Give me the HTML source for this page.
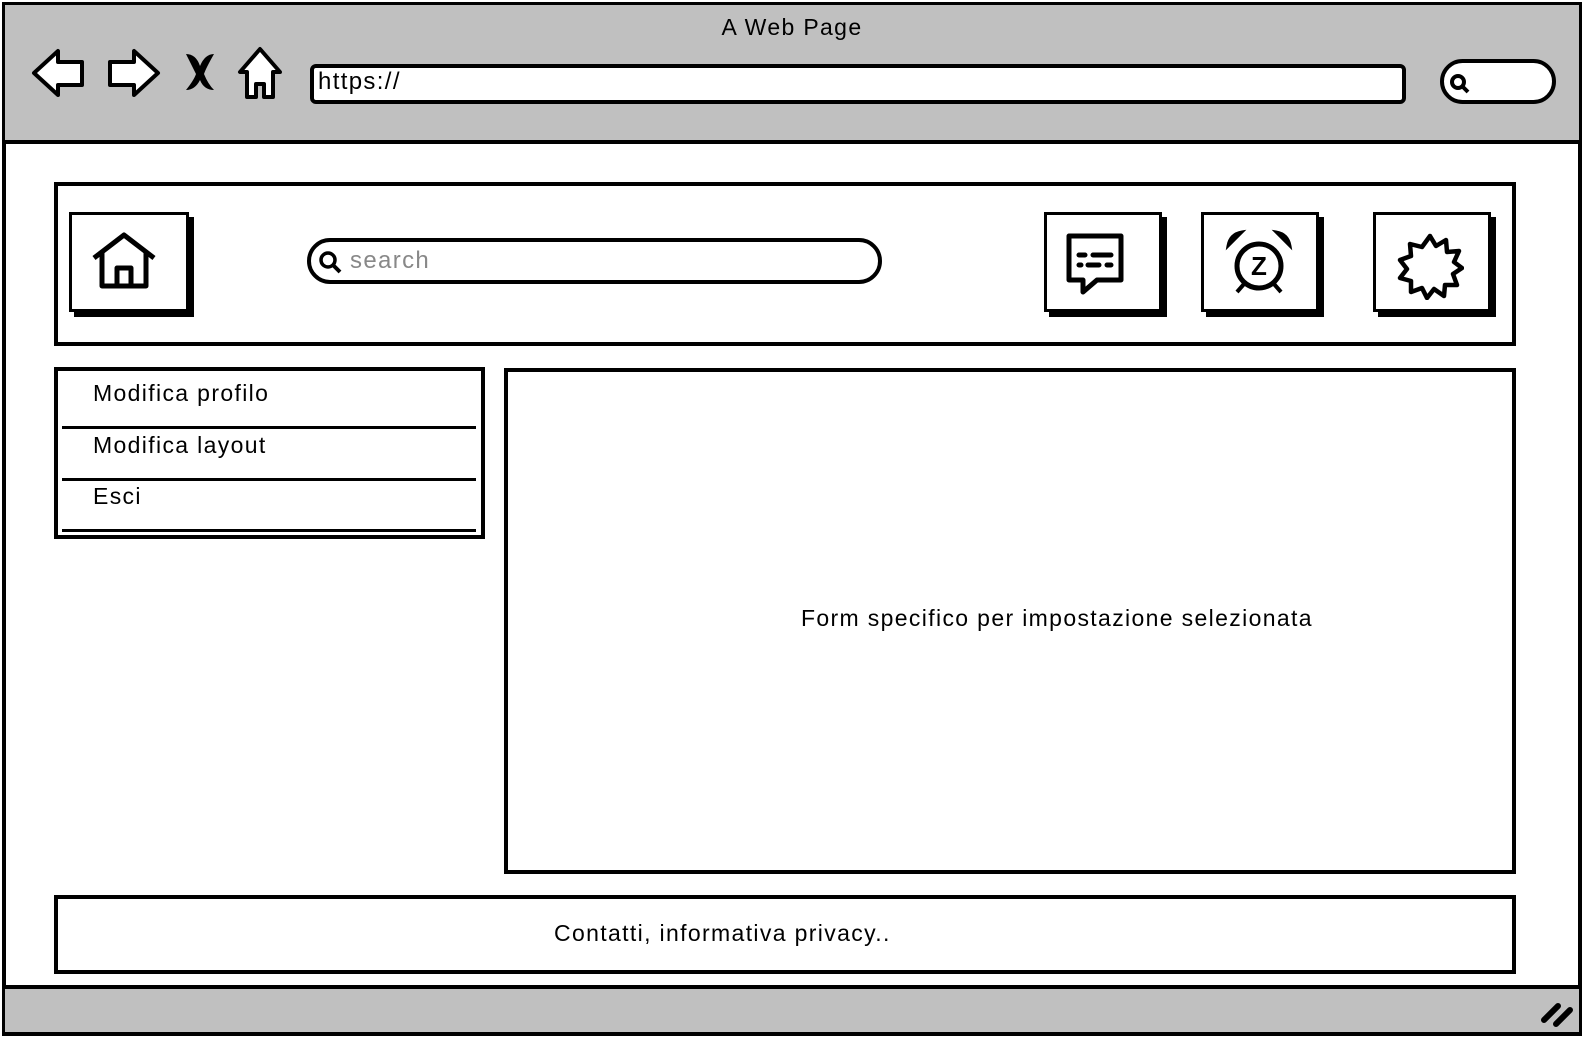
<!DOCTYPE html>
<html><head><meta charset="utf-8"><style>
*{margin:0;padding:0;box-sizing:border-box}
body{width:1584px;height:1040px;background:#fff;position:relative;overflow:hidden;font-family:"Liberation Sans",sans-serif;color:#000}
.a{position:absolute}
.box{position:absolute;border:3px solid #000;background:#fff}
.sh{box-shadow:5px 5px 0 #000}
.t{position:absolute;font-size:23px;white-space:nowrap;letter-spacing:1.35px}
</style></head><body>
<div class="a" style="left:2px;top:2px;width:1580px;height:1034px;border:4px solid #000"></div>
<div class="a" style="left:5px;top:5px;width:1574px;height:139px;background:#c0c0c0;border-bottom:4px solid #000"></div>
<div class="t" style="left:0;width:1584px;text-align:center;top:14px;font-size:23px">A Web Page</div>
<svg class="a" style="left:28px;top:44px" width="260" height="60" viewBox="0 0 260 60">
<g stroke="#000" stroke-width="4" fill="#fff" stroke-linejoin="round">
<path d="M6 29 L30 7 L30 18 L54 18 L54 41 L30 41 L30 51 Z"/>
<path d="M130 29 L106 7 L106 18 L82 18 L82 41 L106 41 L106 51 Z"/>
<path d="M232 5 L212 28 L219 28 L219 53 L228 53 L228 40 L236 40 L236 53 L245 53 L245 28 L252 28 Z"/>
</g>
<path d="M158 10 Q168 10 172 22 Q177 10 186 10 Q178 24 176 30 Q180 40 186 46 Q176 46 172 36 Q167 46 158 46 Q166 36 168 30 Q164 22 158 10Z" fill="#000"/>
</svg>
<div class="box" style="left:310px;top:64px;width:1096px;height:40px;border-radius:6px;border-width:4px"></div>
<div class="t" style="left:318px;top:68px;font-size:24px">https://</div>
<div class="box" style="left:1440px;top:59px;width:116px;height:45px;border-radius:23px;border-width:4px"></div>
<svg class="a" style="left:1448px;top:72px" width="24" height="24"><circle cx="10" cy="10" r="6" stroke="#000" stroke-width="4" fill="none"/><path d="M14 14 L20 20" stroke="#000" stroke-width="4"/></svg>

<div class="box" style="left:54px;top:182px;width:1462px;height:164px;border-width:4px"></div>
<div class="box sh" style="left:69px;top:212px;width:120px;height:100px"></div>
<svg class="a" style="left:90px;top:230px" width="70" height="64" viewBox="0 0 70 64"><g fill="none" stroke="#000" stroke-width="5" stroke-linejoin="round"><path d="M4 28 L34 5 L64 28"/><path d="M12 22 V56 H56 V22"/><path d="M27 56 V38 H41 V56"/></g></svg>
<div class="box" style="left:307px;top:238px;width:575px;height:46px;border-radius:23px;border-width:4px"></div>
<svg class="a" style="left:318px;top:250px" width="26" height="26"><circle cx="10" cy="10" r="7" stroke="#000" stroke-width="3.5" fill="none"/><path d="M15 15 L22 22" stroke="#000" stroke-width="4"/></svg>
<div class="t" style="left:350px;top:247px;color:#888;font-size:24px">search</div>

<div class="box sh" style="left:1044px;top:212px;width:118px;height:100px"></div>
<svg class="a" style="left:1063px;top:230px" width="70" height="70" viewBox="0 0 70 70"><path d="M6 6 H58 V50 H34 L20 62 V50 H6 Z" fill="none" stroke="#000" stroke-width="5" stroke-linejoin="round"/><g stroke="#000" stroke-width="5" stroke-linecap="round"><path d="M16 25 H22 M30 25 H48 M16 35 H18 M25 35 H36 M44 35 H48"/></g></svg>
<div class="box sh" style="left:1201px;top:212px;width:118px;height:100px"></div>
<svg class="a" style="left:1222px;top:228px" width="76" height="72" viewBox="0 0 76 72"><circle cx="37" cy="38" r="22" fill="none" stroke="#000" stroke-width="5"/><path d="M6 18 Q8 6 20 4 Z M68 18 Q66 6 54 4 Z" fill="#000" stroke="#000" stroke-width="3"/><path d="M22 56 L15 64 M52 56 L59 64" stroke="#000" stroke-width="4"/><text x="37" y="47" font-size="26" font-weight="bold" text-anchor="middle" font-family="Liberation Sans">Z</text></svg>
<div class="box sh" style="left:1373px;top:212px;width:118px;height:100px"></div>
<svg class="a" style="left:1396px;top:232px" width="68" height="68" viewBox="0 0 68 68"><path d="M34 4 L40 14 L50 8 L51 20 L63 19 L58 30 L66 36 L57 42 L61 53 L49 53 L48 64 L38 57 L31 66 L26 56 L15 60 L15 49 L4 46 L11 37 L4 28 L15 24 L14 12 L26 15 Z" fill="none" stroke="#000" stroke-width="4.5" stroke-linejoin="round"/></svg>

<div class="box" style="left:54px;top:367px;width:431px;height:172px;border-width:4px"></div>
<div class="t" style="left:93px;top:380px">Modifica profilo</div>
<div class="a" style="left:62px;top:426px;width:414px;height:3px;background:#000"></div>
<div class="t" style="left:93px;top:432px">Modifica layout</div>
<div class="a" style="left:62px;top:478px;width:414px;height:3px;background:#000"></div>
<div class="t" style="left:93px;top:483px">Esci</div>
<div class="a" style="left:62px;top:529px;width:414px;height:3px;background:#000"></div>

<div class="box" style="left:504px;top:368px;width:1012px;height:506px;border-width:4px"></div>
<div class="t" style="left:801px;top:605px">Form specifico per impostazione selezionata</div>

<div class="box" style="left:54px;top:895px;width:1462px;height:79px;border-width:4px"></div>
<div class="t" style="left:554px;top:920px">Contatti, informativa privacy..</div>

<div class="a" style="left:5px;top:985px;width:1574px;height:47px;background:#c0c0c0;border-top:4px solid #000"></div>
<svg class="a" style="left:1540px;top:1000px" width="36" height="28"><path d="M4 20 L18 6 M16 24 L30 10" stroke="#000" stroke-width="6" stroke-linecap="round"/></svg>
</body></html>
